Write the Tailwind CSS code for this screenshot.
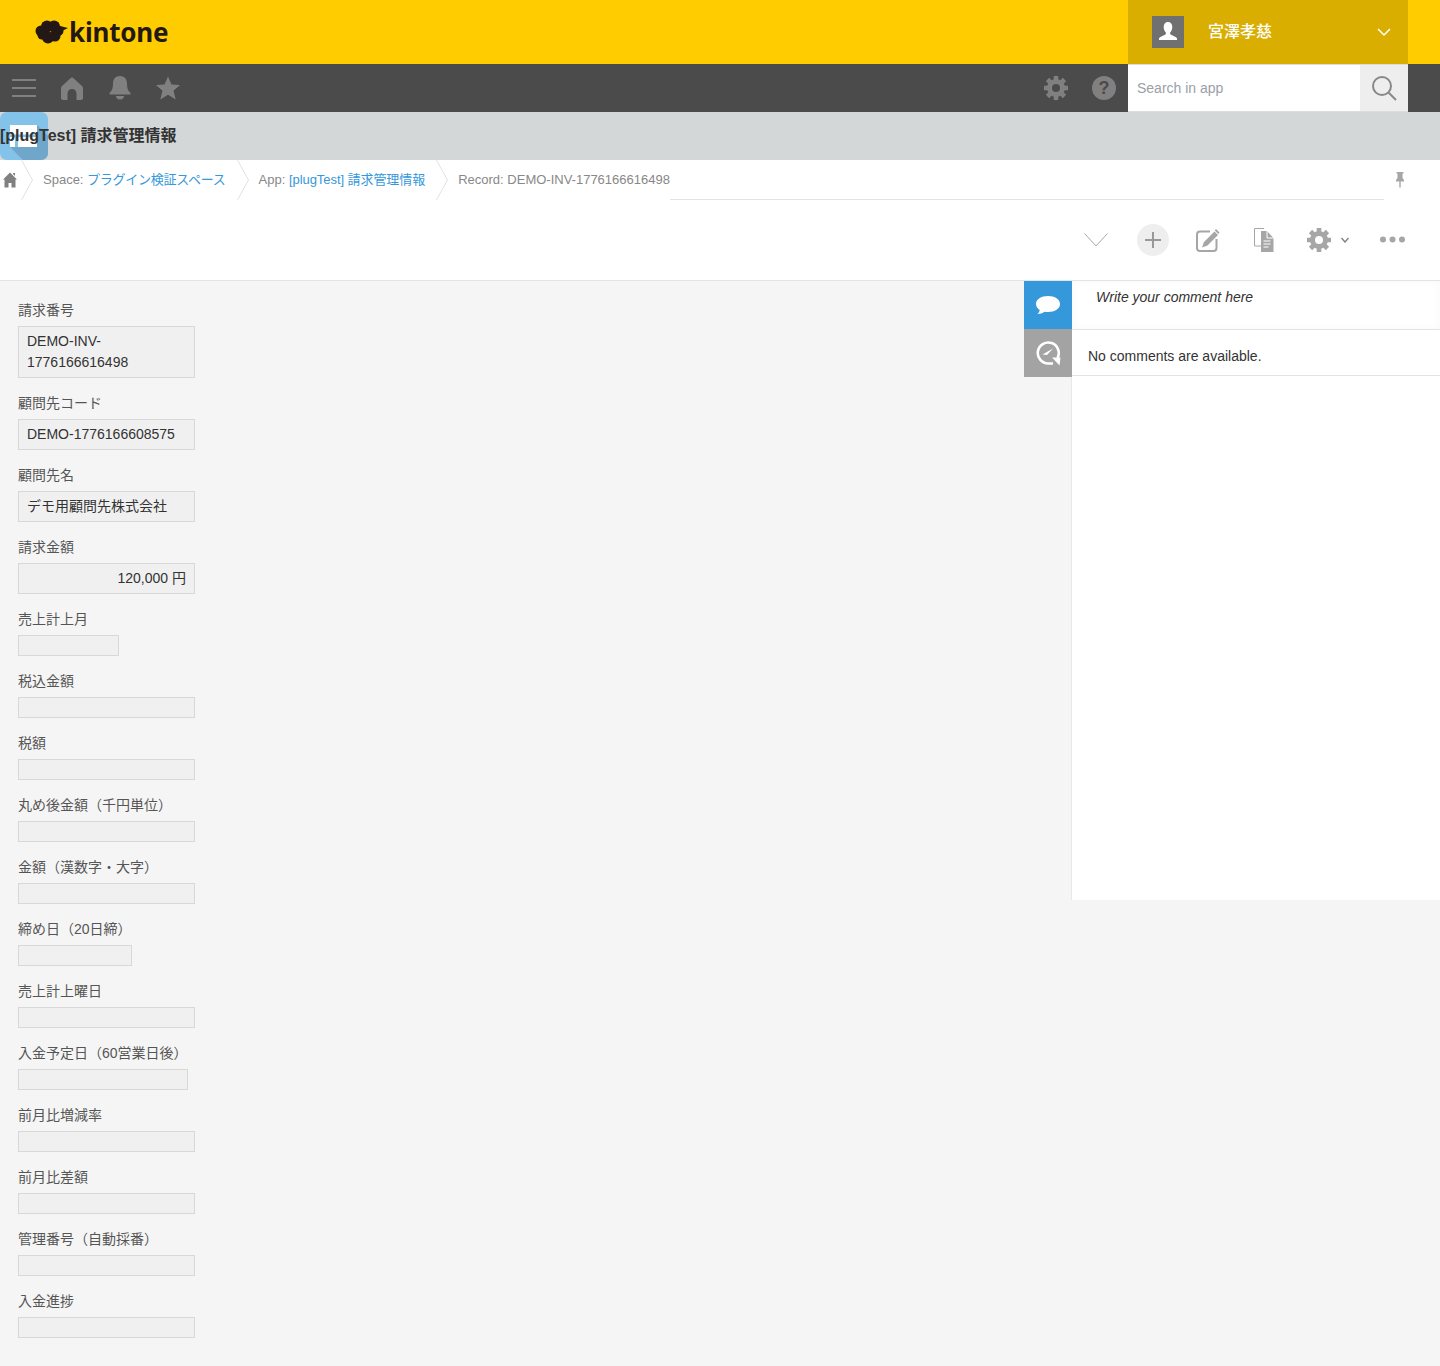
<!DOCTYPE html>
<html lang="ja">
<head>
  <meta charset="UTF-8" />
  <title>kintone</title>
  <script src="https://cdn.jsdelivr.net/npm/@tailwindcss/browser@4"></script>
</head>
<body class="bg-[#f5f5f5] text-[#333] text-sm font-['Liberation_Sans','Noto_Sans_CJK_JP',sans-serif]">
  <!-- header -->
  <header class="h-16 bg-[#ffcc00] flex pr-8">
    <div class="flex-1 flex items-center pl-[35px]">
      <svg width="34" height="24" viewBox="0 0 34 24" fill="#231815"><circle cx="6" cy="11" r="5.500"/><circle cx="12" cy="6.500" r="6"/><circle cx="19" cy="6.500" r="6"/><circle cx="23.500" cy="11" r="5"/><circle cx="20" cy="16" r="5.500"/><circle cx="13" cy="17.500" r="6"/><circle cx="7" cy="15" r="4.500"/><path d="M23 5.500L33 8l-8 4z"/></svg>
      <span class="text-[26px] leading-none font-bold text-[#231815] font-['Noto_Sans',sans-serif] tracking-[-0.2px] mt-[-1px]">kintone</span>
    </div>
    <div class="w-[280px] bg-[#d9ae00] flex items-center pl-6 pr-4">
      <div class="w-8 h-8 bg-[#707070] flex items-center justify-center">
        <svg width="24" height="24" viewBox="0 0 24 24" fill="#fff"><path d="M12 2c2.800 0 4.300 2 4.300 5 0 2.500-1 4.500-2.100 5.500-.4 1.200 0 2 1.300 2.600 2 .9 4.500 1.700 5.500 3.200v1.700H3v-1.700c1-1.500 3.500-2.300 5.500-3.200 1.300-.6 1.700-1.400 1.300-2.600C8.700 11.500 7.700 9.500 7.700 7c0-3 1.500-5 4.300-5z"/></svg>
      </div>
      <span class="ml-6 flex-1 text-base text-white font-medium">宮澤孝慈</span>
      <svg width="16" height="10" viewBox="0 0 16 10" fill="none" stroke="#fff" stroke-width="1.500"><path d="M2 2l6 6 6-6"/></svg>
    </div>
  </header>

  <!-- global nav -->
  <nav class="h-12 bg-[#4b4b4b] flex items-stretch pr-8">
    <div class="w-12 flex items-center justify-center">
      <svg width="24" height="20" viewBox="0 0 24 20" fill="#808080"><rect y="1" width="24" height="2"/><rect y="9" width="24" height="2"/><rect y="17" width="24" height="2"/></svg>
    </div>
    <div class="w-12 flex items-center justify-center">
      <svg width="22" height="23" viewBox="0 0 22 23" fill="#808080"><path d="M11 .5c.6 0 1 .3 1.500.7L21 9c.7.7 1 1.300 1 2.200V21a2 2 0 0 1-2 2h-4.500v-6.500a4.500 4.500 0 0 0-9 0V23H2a2 2 0 0 1-2-2V11.200C0 10.300.3 9.700 1 9l8.500-7.800C10 .8 10.400.5 11 .5z"/></svg>
    </div>
    <div class="w-12 flex items-center justify-center">
      <svg width="24" height="26" viewBox="0 0 24 26" fill="#808080"><path d="M12 1c4.500 0 7 3 7 7.500 0 5 1 7 3.500 9.500v1.500h-21V18C4 15.500 5 13.500 5 8.500 5 4 7.500 1 12 1z"/><path d="M8 21h8c0 2-1.500 3.500-4 3.500S8 23 8 21z"/></svg>
    </div>
    <div class="w-12 flex items-center justify-center">
      <svg width="24" height="24" viewBox="0 0 24 24" fill="#808080"><path d="M12 .5l3.500 8 8.500.6-6.500 5.600 2.200 8.800L12 18.700l-7.700 4.800 2.200-8.800L0 9.100l8.500-.6z"/></svg>
    </div>
    <div class="flex-1"></div>
    <div class="w-12 flex items-center justify-center">
      <svg width="24" height="24" viewBox="0 0 24 24"><path d="M12 0v24M0 12h24M3.500 3.500l17 17M20.500 3.500l-17 17" stroke="#808080" stroke-width="4.600"/><circle cx="12" cy="12" r="9" fill="#808080"/><circle cx="12" cy="12" r="4" fill="#4b4b4b"/></svg>
    </div>
    <div class="w-12 flex items-center justify-center">
      <div class="w-6 h-6 rounded-full bg-[#808080] flex items-center justify-center text-[#4b4b4b] text-lg font-bold leading-none">?</div>
    </div>
    <div class="w-[232px] bg-white border-y border-[#dcdcdc] flex items-center">
      <input class="w-full h-full pl-[9px] outline-none text-sm placeholder:text-[#9aa0a8]" placeholder="Search in app" />
    </div>
    <div class="w-12 bg-[#eeeeee] border-y border-[#dcdcdc] flex items-center justify-center">
      <svg width="26" height="26" viewBox="0 0 26 26" fill="none" stroke="#888" stroke-width="2"><circle cx="11" cy="11" r="9"/><path d="M17.500 17.500L25 25"/></svg>
    </div>
  </nav>

  <!-- app title -->
  <div class="relative h-12 bg-[#d4d7d8] flex items-center">
    <svg class="absolute left-0 top-0" width="48" height="48" viewBox="0 0 48 48"><rect width="48" height="48" rx="7" fill="#83c3ea"/><path d="M10 35L37 13L48 24v17a7 7 0 0 1-7 7H23z" fill="#6fa6ca"/><rect x="10" y="13" width="27" height="22" fill="#fff"/><rect x="15" y="24" width="3" height="11" fill="#83c3ea"/><rect x="10" y="22.500" width="27" height="2.500" fill="#83c3ea"/></svg>
    <h1 class="relative text-base font-bold text-[#333]">[plugTest] 請求管理情報</h1>
  </div>

  <!-- breadcrumb -->
  <div class="h-10 bg-white flex items-stretch text-[13px] text-[#888]">
    <div class="w-[21px] flex items-center pl-[3px]">
      <svg width="14" height="16" viewBox="0 0 14 16" fill="#808080"><path d="M7 .5l7 7h-1.500V15.500H8.500V11h-3v4.500H1.500V7.500H0zM10 1h2v3l-2-2z"/></svg>
    </div>
    <svg width="12" height="40" viewBox="0 0 12 40" fill="none" stroke="#dfe3e3"><path d="M.5 0l11 20-11 20"/></svg>
    <div class="mx-[10px] flex items-center leading-10 mt-[-1px]">Space:&nbsp;<a class="text-[#3498db] tracking-[-0.27px]">プラグイン検証スペース</a></div>
    <svg width="12" height="40" viewBox="0 0 12 40" fill="none" stroke="#dfe3e3" class="ml-[1px]"><path d="M.5 0l11 20-11 20"/></svg>
    <div class="mx-[10px] flex items-center leading-10 mt-[-1px]">App:&nbsp;<a class="text-[#3498db] tracking-[-0.06px]">[plugTest] 請求管理情報</a></div>
    <svg width="12" height="40" viewBox="0 0 12 40" fill="none" stroke="#dfe3e3" class="ml-[1px]"><path d="M.5 0l11 20-11 20"/></svg>
    <div class="ml-[10px] flex items-center leading-10 mt-[-1px]">Record: DEMO-INV-1776166616498</div>
    <div class="flex-1 border-b border-[#e3e3e3]"></div>
    <div class="w-14 flex justify-start pl-[11px] pt-[11px]">
      <svg width="10" height="17" viewBox="0 0 10 17" fill="#a6a6a6"><path d="M1.500 1h7v1.500H7.500v4.500l1.500 2v1.500H1V9l1.500-2V2.500h-1z"/><rect x="4.300" y="10" width="1.400" height="6.500"/></svg>
    </div>
  </div>

  <!-- toolbar -->
  <div class="h-[81px] bg-white border-b border-[#e3e3e3] flex items-center pb-px">
    <div class="flex-1"></div>
    <svg width="24" height="14" viewBox="0 0 24 14" fill="none" stroke="#a6a6a6" class="mr-[29px]"><path d="M.5.500L12 13 23.500.500"/></svg>
    <div class="w-8 h-8 rounded-full bg-[#eeeeee] flex items-center justify-center mr-[27px]">
      <svg width="16" height="16" viewBox="0 0 16 16" stroke="#999" stroke-width="2"><path d="M8 0v16M0 8h16"/></svg>
    </div>
    <svg width="24" height="24" viewBox="0 0 24 24" fill="none" class="mr-[34px]"><path d="M14 3.500H4A3 3 0 0 0 1 6.500V20a3 3 0 0 0 3 3h13.500a3 3 0 0 0 3-3V11" stroke="#a6a6a6" stroke-width="2"/><path d="M18.500 3.500l3.500 3.500L11.500 17.500l-5.500 2 2-5.500z" fill="#a6a6a6"/><path d="M20 1l3.500 3.500-1.200 1.500-3.500-3.500z" fill="#a6a6a6"/></svg>
    <svg width="20" height="24" viewBox="0 0 20 24" fill="none" class="mr-[33px]"><path d="M9 18H.5V.5H10" stroke="#a6a6a6"/><path d="M7 3h6l6.500 7v14H7z" fill="#a6a6a6"/><path d="M13 3v7h6.500" stroke="#fff"/><path d="M9.500 13h7M9.500 16h7M9.500 19h5" stroke="#fff"/></svg>
    <svg width="24" height="24" viewBox="0 0 24 24" class="mr-[10px]"><path d="M12 0v24M0 12h24M3.500 3.500l17 17M20.500 3.500l-17 17" stroke="#a6a6a6" stroke-width="4.600"/><circle cx="12" cy="12" r="9" fill="#a6a6a6"/><circle cx="12" cy="12" r="4" fill="#fff"/></svg>
    <svg width="8" height="6" viewBox="0 0 8 6" fill="none" stroke="#808080" stroke-width="1.400" class="mr-[31px]"><path d="M.5 1L4 5l3.500-4"/></svg>
    <svg width="25" height="7" viewBox="0 0 25 7" fill="#a6a6a6" class="mr-[35px]"><circle cx="3" cy="3.500" r="3"/><circle cx="12.500" cy="3.500" r="3"/><circle cx="22" cy="3.500" r="3"/></svg>
  </div>

  <main class="flex items-start">
    <!-- record fields -->
    <div class="w-[1024px] pl-[18px] pt-[19px] pb-[13px] text-[#333]">
      <div class="pb-[15px]"><div class="h-[21px] leading-[21px] mb-[5px] text-[#555]">請求番号</div><div class="w-[177px] border border-[#d8d8d8] bg-[#f0f0f0] px-2 py-1 leading-[21px]">DEMO-INV-<br>1776166616498</div></div>
      <div class="pb-[15px]"><div class="h-[21px] leading-[21px] mb-[5px] text-[#555]">顧問先コード</div><div class="w-[177px] border border-[#d8d8d8] bg-[#f0f0f0] px-2 py-1 leading-[21px]">DEMO-1776166608575</div></div>
      <div class="pb-[15px]"><div class="h-[21px] leading-[21px] mb-[5px] text-[#555]">顧問先名</div><div class="w-[177px] border border-[#d8d8d8] bg-[#f0f0f0] px-2 py-1 leading-[21px]">デモ用顧問先株式会社</div></div>
      <div class="pb-[15px]"><div class="h-[21px] leading-[21px] mb-[5px] text-[#555]">請求金額</div><div class="w-[177px] border border-[#d8d8d8] bg-[#f0f0f0] px-2 py-1 leading-[21px] text-right">120,000 円</div></div>
      <div class="pb-[15px]"><div class="h-[21px] leading-[21px] mb-[5px] text-[#555]">売上計上月</div><div class="w-[101px] h-[21px] border border-[#d8d8d8] bg-[#f0f0f0]"></div></div>
      <div class="pb-[15px]"><div class="h-[21px] leading-[21px] mb-[5px] text-[#555]">税込金額</div><div class="w-[177px] h-[21px] border border-[#d8d8d8] bg-[#f0f0f0]"></div></div>
      <div class="pb-[15px]"><div class="h-[21px] leading-[21px] mb-[5px] text-[#555]">税額</div><div class="w-[177px] h-[21px] border border-[#d8d8d8] bg-[#f0f0f0]"></div></div>
      <div class="pb-[15px]"><div class="h-[21px] leading-[21px] mb-[5px] text-[#555]">丸め後金額（千円単位）</div><div class="w-[177px] h-[21px] border border-[#d8d8d8] bg-[#f0f0f0]"></div></div>
      <div class="pb-[15px]"><div class="h-[21px] leading-[21px] mb-[5px] text-[#555]">金額（漢数字・大字）</div><div class="w-[177px] h-[21px] border border-[#d8d8d8] bg-[#f0f0f0]"></div></div>
      <div class="pb-[15px]"><div class="h-[21px] leading-[21px] mb-[5px] text-[#555]">締め日（20日締）</div><div class="w-[114px] h-[21px] border border-[#d8d8d8] bg-[#f0f0f0]"></div></div>
      <div class="pb-[15px]"><div class="h-[21px] leading-[21px] mb-[5px] text-[#555]">売上計上曜日</div><div class="w-[177px] h-[21px] border border-[#d8d8d8] bg-[#f0f0f0]"></div></div>
      <div class="pb-[15px]"><div class="h-[21px] leading-[21px] mb-[5px] text-[#555]">入金予定日（60営業日後）</div><div class="w-[170px] h-[21px] border border-[#d8d8d8] bg-[#f0f0f0]"></div></div>
      <div class="pb-[15px]"><div class="h-[21px] leading-[21px] mb-[5px] text-[#555]">前月比増減率</div><div class="w-[177px] h-[21px] border border-[#d8d8d8] bg-[#f0f0f0]"></div></div>
      <div class="pb-[15px]"><div class="h-[21px] leading-[21px] mb-[5px] text-[#555]">前月比差額</div><div class="w-[177px] h-[21px] border border-[#d8d8d8] bg-[#f0f0f0]"></div></div>
      <div class="pb-[15px]"><div class="h-[21px] leading-[21px] mb-[5px] text-[#555]">管理番号（自動採番）</div><div class="w-[177px] h-[21px] border border-[#d8d8d8] bg-[#f0f0f0]"></div></div>
      <div class="pb-[15px]"><div class="h-[21px] leading-[21px] mb-[5px] text-[#555]">入金進捗</div><div class="w-[177px] h-[21px] border border-[#d8d8d8] bg-[#f0f0f0]"></div></div>
    </div>

    <!-- sidebar -->
    <div class="relative w-[48px] flex-none">
      <div class="h-12 bg-[#3498db] flex items-center justify-center">
        <svg width="26" height="20" viewBox="0 0 26 20" fill="#fff"><path d="M13 1c7 0 12 3.500 12 8s-5 8-12 8c-1.200 0-2.300-.1-3.400-.3C7.500 18 5 19 2.500 19c1.300-1.100 2-2.500 2.200-4C2.400 13.500 1 11.400 1 9c0-4.500 5-8 12-8z"/></svg>
      </div>
      <div class="h-12 bg-[#a3a3a3] flex items-center justify-center">
        <svg width="26" height="26" viewBox="0 0 26 26" fill="none" stroke="#fff" stroke-width="2.600"><path d="M22.500 18A10.500 10.500 0 1 0 13.500 23.500H18"/><path d="M7.500 14.500L12 15 18 8.500 11 12.500z" fill="#fff" stroke="none"/><path d="M17 17.500l8.500 0-1 8z" fill="#fff" stroke="none"/></svg>
      </div>
    </div>
    <div class="w-[368px] h-[619px] bg-white shadow-[-1px_0_0_#e8e8e8]">
      <div class="h-[49px] border-b border-[#e3e3e3] pl-6 pt-[6px] italic leading-5 text-[#333] shadow-[inset_0_0_8px_rgba(0,0,0,0.03)]">Write your comment here</div>
      <div class="h-[46px] border-b border-[#e3e3e3] pl-4 flex items-center pt-[6px]">No comments are available.</div>
    </div>
  </main>
</body>
</html>
